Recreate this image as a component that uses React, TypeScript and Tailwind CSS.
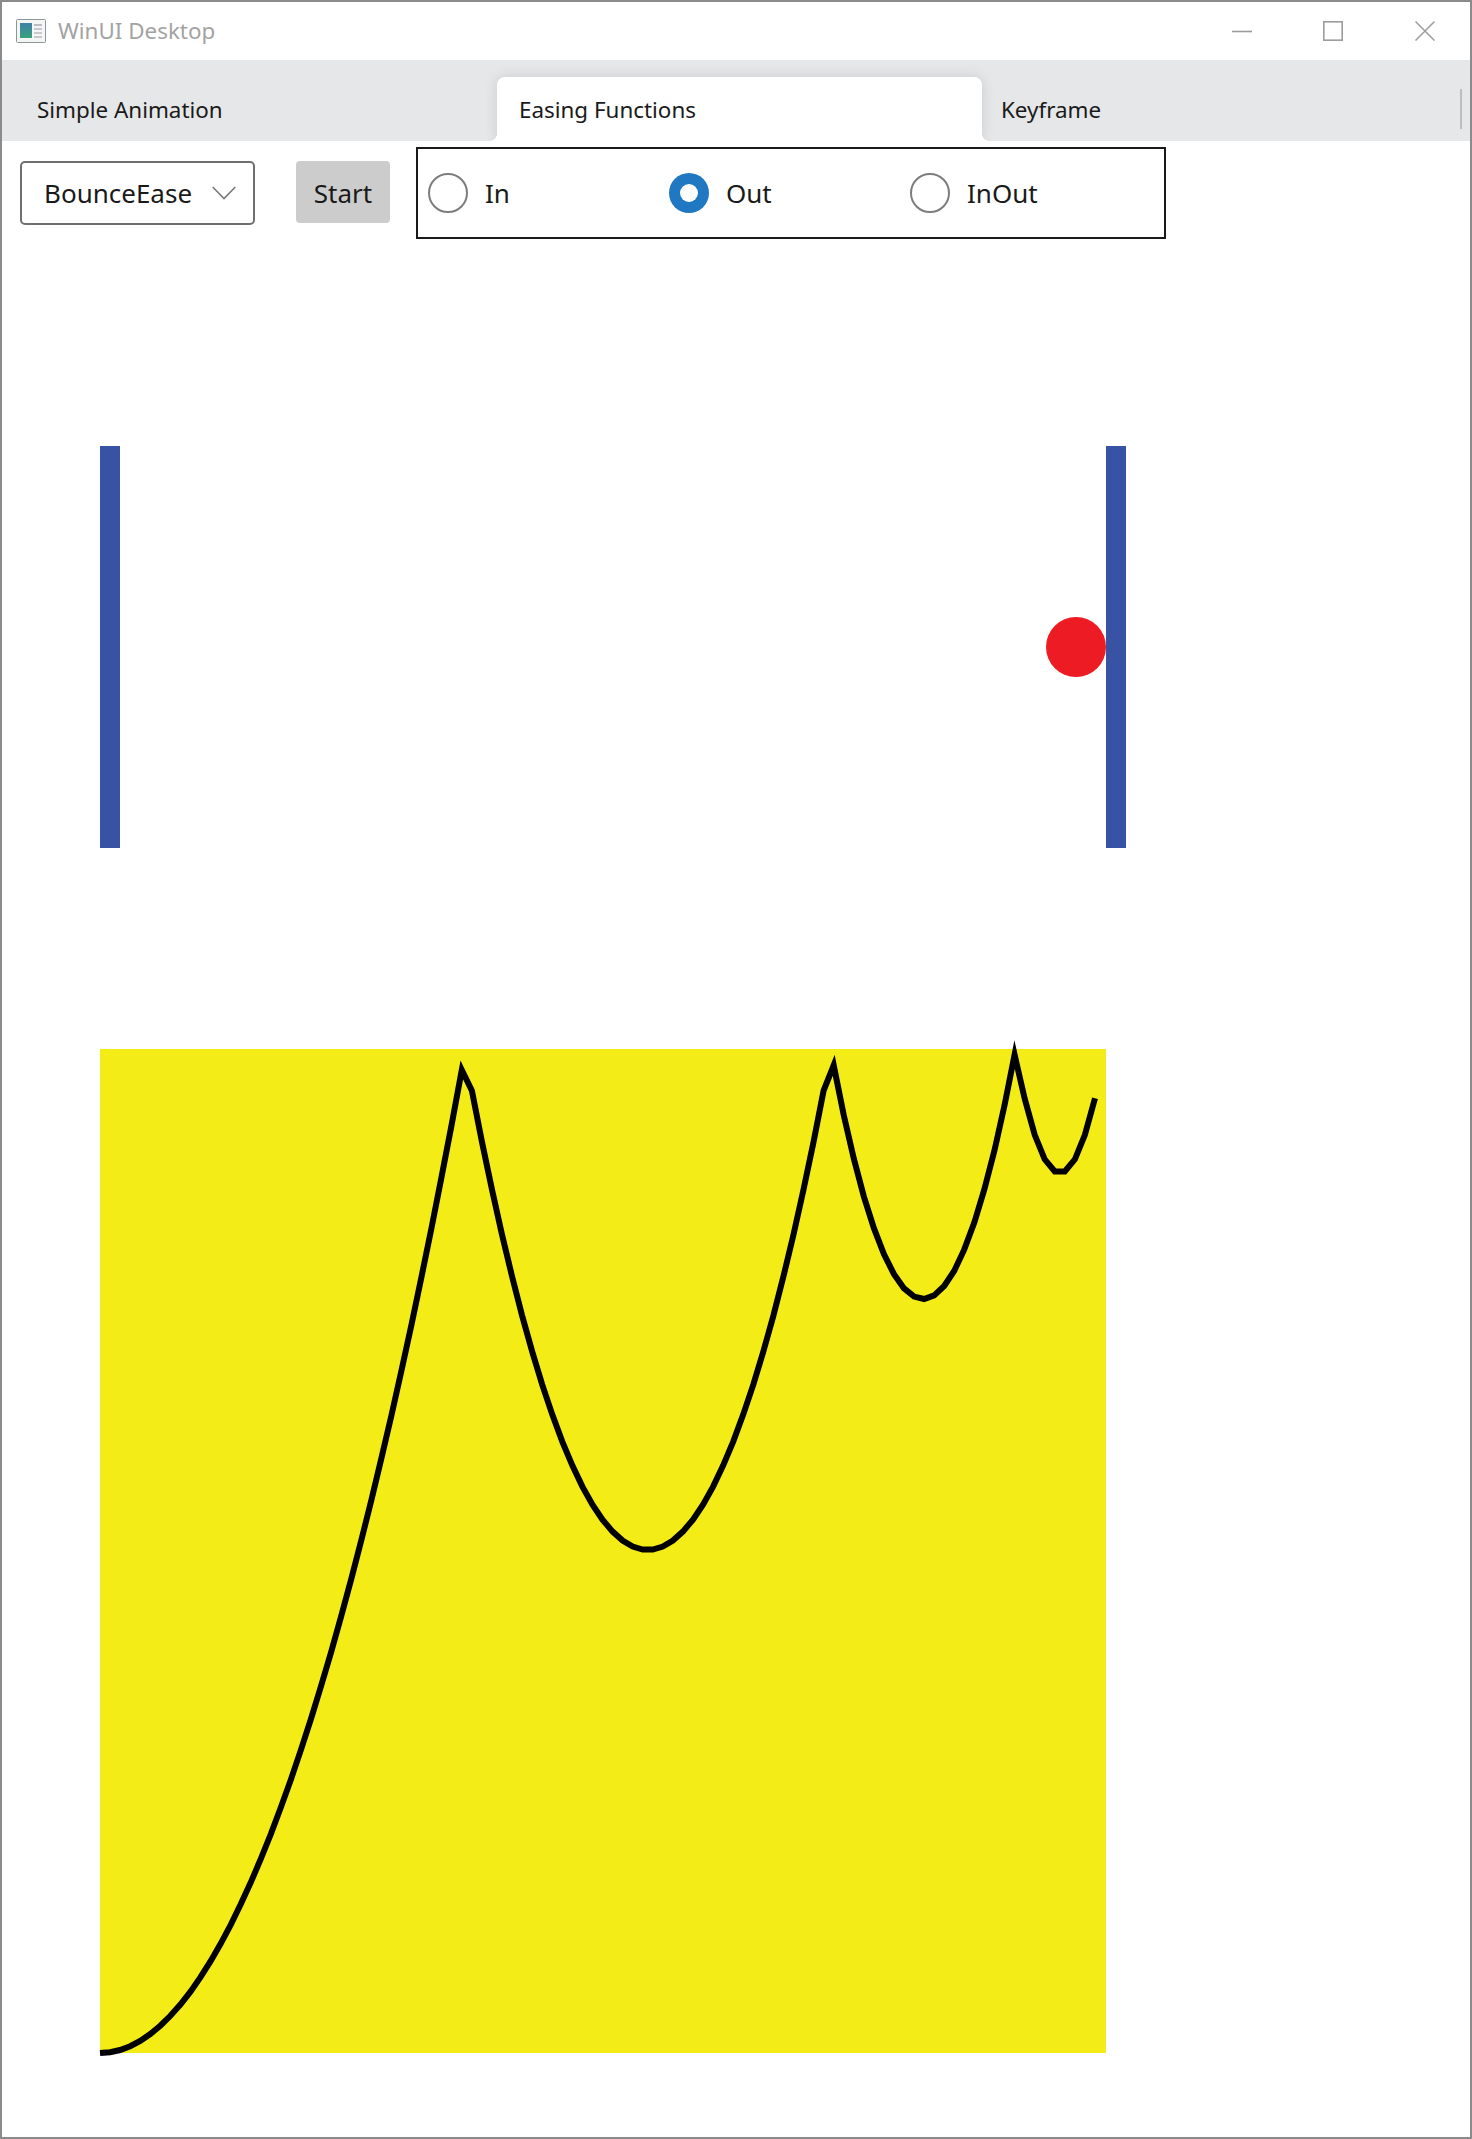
// Sampled like the original: t = 0 .. 0.99 in steps of 0.01, so the peaks keep their kinks
function bounceY(k: number): number {
  if (k <= 36) return 2053 - 983 * (k / 36) ** 2;
  if (k <= 72) return 1550 - 1.5 * (k - 54.5) ** 2;
  if (k <= 91) return 1299 - 2.95 * (k - 81.9) ** 2;
  return 1173 - 6.1 * (k - 95.5) ** 2;
}

const CURVE_POINTS = Array.from({ length: 100 }, (_, k) => {
  const x = k * 10.05;
  const y = bounceY(k) - 1049;
  return `${x.toFixed(1)},${y.toFixed(1)}`;
}).join(' ');

const FONT = "font-['Noto_Sans','Open_Sans',sans-serif]";

function AppIcon() {
  return (
    <svg width="30" height="24" viewBox="0 0 30 24" aria-hidden>
      <defs>
        <linearGradient id="appIconFill" x1="0" y1="0" x2="0" y2="1">
          <stop offset="0" stopColor="#3f7fa8" />
          <stop offset="1" stopColor="#3aa37a" />
        </linearGradient>
      </defs>
      <rect x="0.5" y="0.5" width="29" height="23" rx="1" fill="#f4f5f5" stroke="#8f9496" />
      <rect x="4" y="4" width="12" height="15" fill="url(#appIconFill)" />
      <rect x="18" y="5" width="8" height="2" fill="#b9bdbf" />
      <rect x="18" y="9" width="8" height="2" fill="#c6c9cb" />
      <rect x="18" y="13" width="8" height="2" fill="#c6c9cb" />
      <rect x="18" y="17" width="8" height="2" fill="#c6c9cb" />
    </svg>
  );
}

function CaptionButtons() {
  return (
    <div className="flex items-center">
      <svg width="20" height="20" viewBox="0 0 20 20" className="mr-[71px]" aria-hidden>
        <path d="M0 10.5H20" stroke="#9c9c9c" strokeWidth="1.6" />
      </svg>
      <svg width="20" height="20" viewBox="0 0 20 20" className="mr-[72px]" aria-hidden>
        <rect x="0.8" y="0.8" width="18.4" height="18.4" fill="none" stroke="#9c9c9c" strokeWidth="1.6" />
      </svg>
      <svg width="20" height="20" viewBox="0 0 20 20" className="mr-[35px]" aria-hidden>
        <path d="M0.5 0.5L19.5 19.5M19.5 0.5L0.5 19.5" stroke="#9c9c9c" strokeWidth="1.5" />
      </svg>
    </div>
  );
}

function Radio({ label, checked }: { label: string; checked?: boolean }) {
  return (
    <div className="flex w-[241px] items-center">
      {checked ? (
        <span className="flex h-10 w-10 items-center justify-center rounded-full bg-[#1f78c1]">
          <span className="h-[18px] w-[18px] rounded-full bg-white" />
        </span>
      ) : (
        <span className="h-10 w-10 rounded-full border-2 border-[#7d7d7d] bg-white" />
      )}
      <span className="ml-[17px] text-[26px] leading-none text-[#1a1a1a]">{label}</span>
    </div>
  );
}

export default function App() {
  return (
    <div className={`h-[2139px] w-[1472px] overflow-hidden border-2 border-[#8b8b8b] bg-white ${FONT}`}>
      <div className="flex h-[58px] items-center justify-between">
        <div className="flex items-center pl-[14px]">
          <AppIcon />
          <span className="ml-[12px] text-[22.4px] leading-none text-[#a3a3a3]">WinUI Desktop</span>
        </div>
        <CaptionButtons />
      </div>

      <div className="flex h-[81px] overflow-hidden bg-[#e6e7e8] text-[22.4px] leading-none text-[#1a1a1a]">
        <div className="flex w-[495px] items-center pl-[35px] pt-[20px]">Simple Animation</div>
        <div className="relative mt-[17px] flex w-[485px] items-center rounded-t-lg bg-white pl-[22px] pt-[3px] shadow-[0_0_14px_rgba(0,0,0,0.12)] before:absolute before:bottom-0 before:left-[-8px] before:h-2 before:w-2 before:bg-[radial-gradient(circle_at_top_left,transparent_8px,white_8px)] after:absolute after:bottom-0 after:right-[-8px] after:h-2 after:w-2 after:bg-[radial-gradient(circle_at_top_right,transparent_8px,white_8px)]">
          Easing Functions
        </div>
        <div className="flex flex-1 items-center pl-[19px] pt-[20px]">Keyframe</div>
        <div className="mr-2 mt-[29px] h-[40px] w-[2px] bg-[#bdbebf]" />
      </div>

      <div className="flex items-start pl-[18px] pt-[6px]">
        <div className="mt-[14px] flex h-[64px] w-[235px] items-center justify-between rounded-[5px] border-2 border-[#6f6f6f] pl-[22px] pr-[17px] text-[26px] leading-none text-[#1a1a1a]">
          BounceEase
          <svg width="24" height="14" viewBox="0 0 24 14" aria-hidden>
            <path d="M0.7 1L12 12.6L23.3 1" fill="none" stroke="#7a7a7a" strokeWidth="1.6" />
          </svg>
        </div>
        <div className="ml-[41px] mt-[14px] flex h-[62px] w-[94px] items-center justify-center rounded-[4px] bg-[#cccccc] pt-[1px] text-[26px] leading-none text-[#1a1a1a]">
          Start
        </div>
        <div className="ml-[26px] flex h-[92px] w-[750px] items-center border-2 border-[#1a1a1a] pl-[10px]">
          <Radio label="In" />
          <Radio label="Out" checked />
          <Radio label="InOut" />
        </div>
      </div>

      <div className="ml-[98px] mt-[207px] flex h-[402px] w-[1026px]">
        <div className="w-5 bg-[#3953a4]" />
        <div className="flex flex-1 items-center justify-end">
          <div className="h-[60px] w-[60px] rounded-full bg-[#ed1c24]" />
        </div>
        <div className="w-5 bg-[#3953a4]" />
      </div>

      <div className="relative ml-[98px] mt-[201px] h-[1004px] w-[1006px] bg-[#f4ec16]">
        <svg className="absolute left-0 top-0 overflow-visible" width="1006" height="1004" viewBox="0 0 1006 1004" aria-hidden>
          <polyline points={CURVE_POINTS} fill="none" stroke="#000000" strokeWidth="6" strokeLinejoin="miter" strokeMiterlimit="10" />
        </svg>
      </div>
    </div>
  );
}
